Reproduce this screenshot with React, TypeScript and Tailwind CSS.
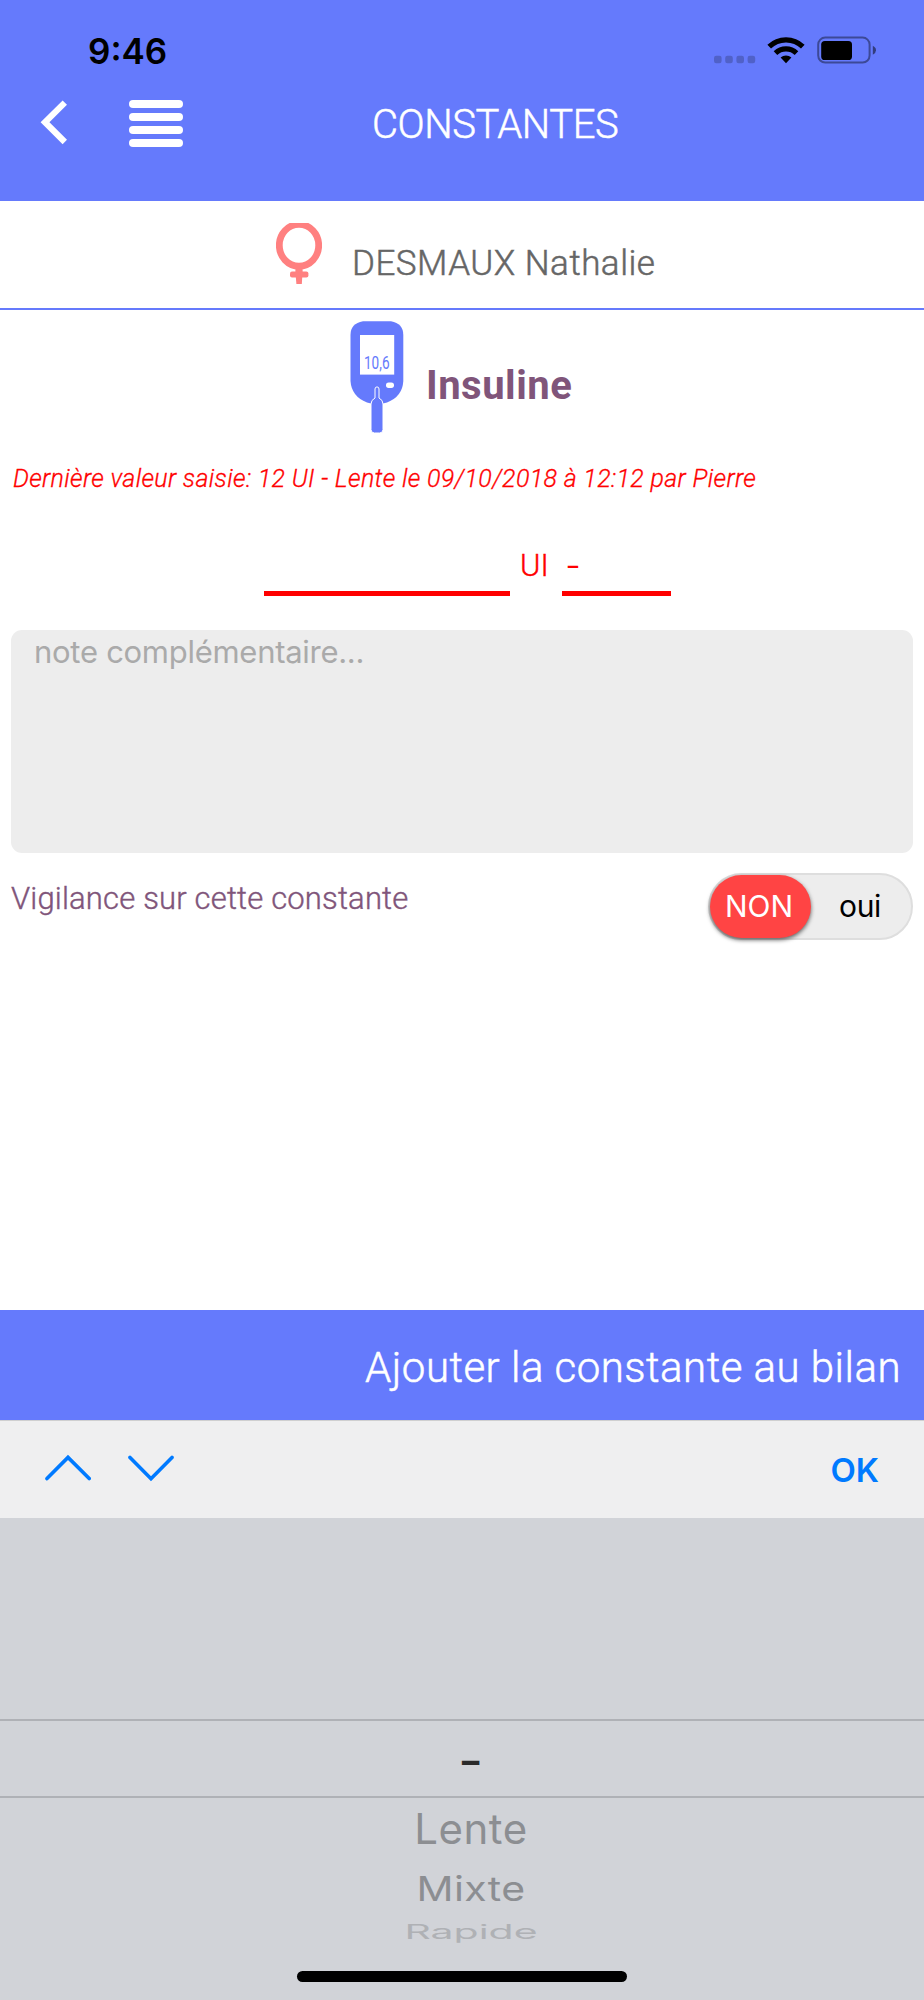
import React, { useState } from "react";

function StatusBar() {
  return (
    <div className="flex h-[42px] items-center text-black">
      <span className="ml-[88px] w-[626px] font-['Inter',sans-serif] text-[35px] font-semibold leading-[42px]">
        9:46
      </span>
      {/* no signal */}
      <svg width="42" height="28" viewBox="0 0 42 28" fill="#000" opacity="0.2">
        <rect x="0" y="18.8" width="7.6" height="7.4" rx="2.2" />
        <rect x="11.2" y="18.8" width="7.6" height="7.4" rx="2.2" />
        <rect x="22.4" y="18.8" width="7.6" height="7.4" rx="2.2" />
        <rect x="33.6" y="18.8" width="7.6" height="7.4" rx="2.2" />
      </svg>
      {/* wifi */}
      <svg className="-mt-0.5 ml-[11px]" width="38" height="28" viewBox="0 0 38 28">
        <g fill="none" stroke="#000" strokeWidth="5.2">
          <path d="M2.2 10.6A24.2 24.2 0 0 1 35.8 10.6" />
          <path d="M8.5 17.1A15.2 15.2 0 0 1 29.5 17.1" />
        </g>
        <path d="M13.6 21.6A8.2 8.2 0 0 1 24.4 21.6L19 27.2Z" fill="#000" />
      </svg>
      {/* battery */}
      <svg className="-mt-0.5 ml-3" width="60" height="28" viewBox="0 0 60 28">
        <rect x="1.2" y="1.6" width="51.4" height="25" rx="7" fill="none" stroke="#000" strokeOpacity="0.4" strokeWidth="2" />
        <rect x="4.2" y="5" width="30.8" height="19" rx="3.6" />
        <path d="M55.8 9.8Q59 11.4 59 14.2T55.8 18.8Z" opacity="0.5" />
      </svg>
    </div>
  );
}

function Header() {
  return (
    <header className="h-[201px] bg-[#657afc] pt-[30px]">
      <StatusBar />
      <div className="flex h-[102px] items-center pl-10 text-white">
        <button aria-label="Retour">
          <svg width="28" height="46" viewBox="0 0 28 46" fill="none">
            <path d="M24.8 2.6L5 22.2L24.8 42" stroke="#fff" strokeWidth="6.2" />
          </svg>
        </button>
        <button aria-label="Menu" className="ml-[61px] mt-px flex flex-col gap-[5.2px]">
          <span className="h-[8px] w-[54px] rounded-full bg-white" />
          <span className="h-[8px] w-[54px] rounded-full bg-white" />
          <span className="h-[8px] w-[54px] rounded-full bg-white" />
          <span className="h-[8px] w-[54px] rounded-full bg-white" />
        </button>
        <h1 className="ml-[189px] mt-[3px] text-[40px] font-light leading-[48px] tracking-[-0.45px] [-webkit-text-stroke:0.5px]">
          CONSTANTES
        </h1>
      </div>
    </header>
  );
}

function FemaleIcon() {
  return (
    <svg width="46" height="62" viewBox="0 0 46 62">
      <ellipse cx="23" cy="22.3" rx="19.7" ry="20.9" fill="none" stroke="#ff8080" strokeWidth="6.8" />
      <rect x="14" y="48.6" width="18.4" height="6" rx="2" fill="#ff8080" />
      <path d="M19.4 45H26.6V49L25.8 61H20.4L19.4 49Z" fill="#ff8080" />
    </svg>
  );
}

function MeterIcon() {
  return (
    <svg width="54" height="113" viewBox="0 0 54 113">
      <path
        d="M13 .3H41Q53.3 2.5 53.3 14V60Q52.5 75.5 37 81.5Q27 85 17 81.5Q1.5 75.5 .5 60V14Q.5 2.5 13 .3Z"
        fill="#657afc"
      />
      <rect x="10" y="14" width="34.2" height="39.6" fill="#fff" />
      <text
        x="14"
        y="48"
        fontFamily="Roboto, sans-serif"
        fontSize="18.5"
        textLength="25.5"
        lengthAdjust="spacingAndGlyphs"
        fill="#657afc"
      >
        10,6
      </text>
      <rect x="36" y="61.5" width="8" height="5.4" rx="2.6" fill="#fff" />
      <path
        d="M25 77V68Q25 65.9 27 65.9T29 68V77Q33 79 33 83V108.5Q33 112 29.5 112H24.5Q21 112 21 108.5V83Q21 79 25 77Z"
        fill="#657afc"
        stroke="#fff"
        strokeWidth="1"
      />
    </svg>
  );
}

function Toggle() {
  const [vigilance, setVigilance] = useState(false);

  return (
    <button
      onClick={() => setVigilance(!vigilance)}
      className="flex h-[67px] w-[205px] items-center rounded-full border-2 border-[#dedede] bg-[#ededed] pb-px font-['Inter',sans-serif] text-[30px] leading-[36px]"
    >
      <span className="flex h-[63px] w-[101px] items-center justify-center rounded-full bg-[#ff4444] pr-[3px] text-white shadow-[0_2px_4px_rgba(0,0,0,0.6)]">
        NON
      </span>
      <span className="flex-1 pr-0.5 text-center tracking-[-0.3px] text-black">oui</span>
    </button>
  );
}

function KeyboardBar() {
  return (
    <div className="flex h-[98px] items-center border-t border-[#cfcfd0] bg-[#efeff0] pl-[45px] pr-[45px]">
      <svg className="-mt-[3px]" width="46" height="28" viewBox="0 0 46 28" fill="none" stroke="#007aff" strokeWidth="3.6" strokeLinecap="round">
        <path d="M2 24.6L23 3.4L44.2 24.6" />
      </svg>
      <svg className="-mt-[3px] ml-[37px]" width="46" height="28" viewBox="0 0 46 28" fill="none" stroke="#007aff" strokeWidth="3.6" strokeLinecap="round">
        <path d="M2 3.4L23 24.8L44 3.4" />
      </svg>
      <button className="ml-auto mt-px font-['Inter',sans-serif] text-[33px] font-semibold leading-[40px] text-[#007aff]">
        OK
      </button>
    </div>
  );
}

function Picker() {
  return (
    <div className="flex h-[482px] flex-col items-center bg-[#d1d3d8] pt-[201px] font-['Inter',sans-serif] text-[#8c8e92]">
      <div className="flex h-[79px] w-full items-center justify-center border-y-2 border-[#afb1b6] pl-[17px]">
        <span className="mt-[3px] scale-x-130 text-[41px] font-semibold leading-[48px] text-[#2b2b2b]">-</span>
      </div>
      <span className="ml-[18px] mt-[6px] text-[42px] leading-[50px] tracking-[0.5px]">Lente</span>
      <span className="ml-[18px] mt-[10px] scale-y-[0.82] text-[41px] leading-[50px] tracking-[0.4px]">Mixte</span>
      <span className="ml-[18px] mt-[-7px] scale-y-[0.48] text-[41px] leading-[50px] text-[#afb1b5]">Rapide</span>
      <div className="mt-[14px] h-[11px] w-[330px] rounded-full bg-black" />
    </div>
  );
}

export default function App() {
  return (
    <div className="flex h-[2000px] w-[924px] flex-col overflow-hidden whitespace-nowrap bg-white font-['Roboto',sans-serif]">
      <Header />

      {/* Patient */}
      <div className="flex h-[109px] border-b-2 border-[#657afc] pl-[276px] pt-[22px]">
        <FemaleIcon />
        <span className="ml-[30px] mt-[20px] text-[35px] font-light leading-[42px] tracking-[0.5px] text-[#666] [-webkit-text-stroke:0.5px]">
          DESMAUX Nathalie
        </span>
      </div>

      {/* Constante */}
      <div className="flex h-[136px] pl-[350px] pt-[11px]">
        <MeterIcon />
        <h2 className="ml-[22px] mt-[41px] text-[40px] font-bold leading-[48px] tracking-[0.5px] text-[#80557a]">
          Insuline
        </h2>
      </div>

      <p className="mt-[18px] pl-[13px] text-[25px] font-light italic leading-[30px] tracking-[0.34px] text-[#ff0000] [-webkit-text-stroke:0.3px]">
        Dernière valeur saisie: 12 UI - Lente le 09/10/2018 à 12:12 par Pierre
      </p>

      <div className="mt-[51px] flex h-[51px] pl-[264px] text-[31px] font-light leading-[42px] text-[#ff0000]">
        <div className="w-[246px] border-b-[5px] border-[#ff0000]" />
        <span className="w-[52px] pl-[10px] [-webkit-text-stroke:0.4px]">UI</span>
        <div className="w-[109px] border-b-[5px] border-[#ff0000] pl-[5px]">
          <span className="inline-block origin-left scale-x-140 font-normal leading-[34px]">-</span>
        </div>
      </div>

      <div className="ml-[11px] mt-[34px] h-[223px] w-[902px] rounded-[11px] bg-[#ededed] pl-[23px] pt-[3px] font-['Inter',sans-serif] text-[31px] leading-[38px] tracking-[-0.28px] text-[#aaa]">
        note complémentaire...
      </div>

      <div className="mt-[20px] flex justify-between pl-[11px] pr-[11px]">
        <span className="mt-[7px] text-[31px] font-light leading-[38px] tracking-[0.17px] text-[#80557a] [-webkit-text-stroke:0.4px]">
          Vigilance sur cette constante
        </span>
        <Toggle />
      </div>

      <button className="mt-auto flex h-[110px] shrink-0 items-center justify-end bg-[#657afc] pr-[23px] pt-[5px] text-[42px] font-light leading-[50px] tracking-[0.48px] text-white [-webkit-text-stroke:0.5px]">
        Ajouter la constante au bilan
      </button>
      <KeyboardBar />
      <Picker />
    </div>
  );
}
